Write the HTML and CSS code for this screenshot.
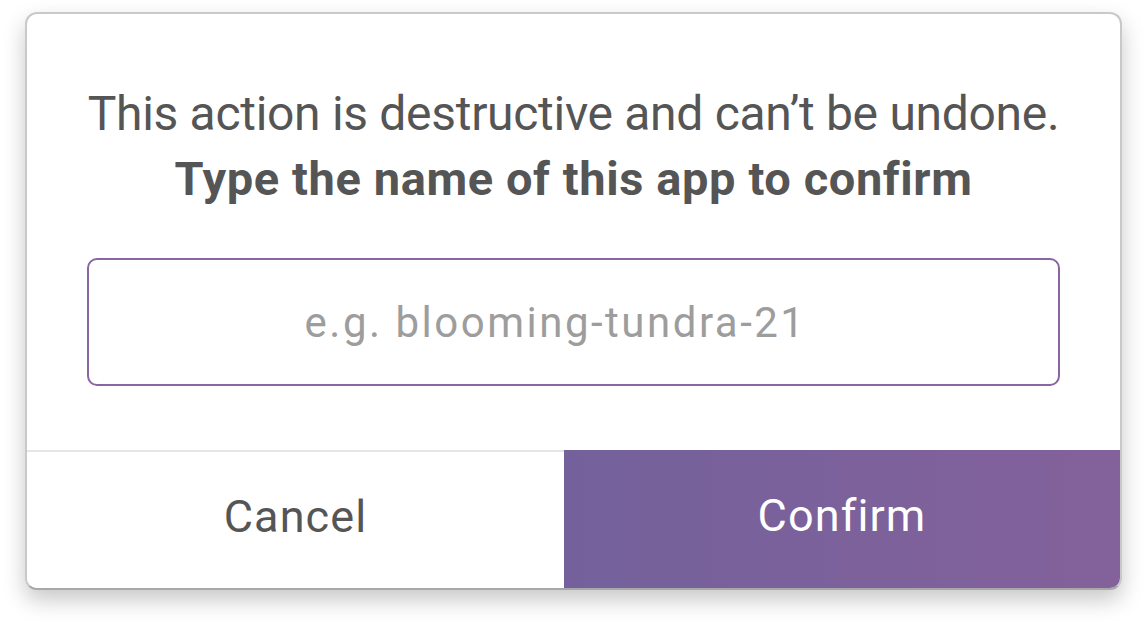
FILE: index.html
```html
<!DOCTYPE html>
<html>
<head>
<meta charset="utf-8">
<link rel="stylesheet" href="styles.css">
</head>
<body>
<div class="dialog">
  <div class="dialog-body">
    <p class="msg">This action is destructive and can’t be undone.</p>
    <p class="msg strong">Type the name of this app to confirm</p>
    <input class="app-input" type="text" placeholder="e.g. blooming-tundra-21">
  </div>
  <div class="actions">
    <button class="btn cancel">Cancel</button>
    <button class="btn confirm">Confirm</button>
  </div>
</div>
</body>
</html>
```

FILE: styles.css
```css
html, body {
  margin: 0;
  padding: 0;
  background: #ffffff;
}
body {
  font-family: Roboto, "Liberation Sans", sans-serif;
  color: #555555;
  min-height: 627px;
  box-sizing: border-box;
  padding: 12px 0 0 25px;
}
.dialog {
  box-sizing: border-box;
  width: 1097px;
  height: 578px;
  border: 2px solid #c9c9c9;
  border-bottom-color: #a8a8a8;
  border-radius: 12px;
  overflow: hidden;
  background: #fff;
  display: flex;
  flex-direction: column;
  box-shadow: 0 10px 22px rgba(0, 0, 0, 0.22);
}
.dialog-body {
  padding: 67px 60px 0;
  flex: 1;
  text-align: center;
}
.msg {
  margin: 0 -40px;
  font-size: 48px;
  line-height: 65px;
  font-weight: 400;
  letter-spacing: -0.3px;
  white-space: nowrap;
}
.msg.strong {
  font-weight: 700;
  font-size: 47px;
  letter-spacing: 0.6px;
}
.app-input {
  display: block;
  box-sizing: border-box;
  width: 100%;
  height: 128px;
  margin-top: 47px;
  border: 2.5px solid #8a65a1;
  border-radius: 10px;
  font-family: inherit;
  font-size: 42px;
  letter-spacing: 2.5px;
  color: #555;
  text-align: center;
  padding: 0 36px 0 0;
  outline: none;
}
.app-input::placeholder {
  color: #9d9d9d;
}
.actions {
  display: flex;
  height: 138px;
}
.btn {
  border: 0;
  margin: 0;
  padding: 0 0 8px;
  font-family: inherit;
  font-size: 45px;
  letter-spacing: 1.1px;
  cursor: pointer;
}
.cancel {
  width: 537px;
  background: #fff;
  color: #555;
  border-top: 2px solid #e6e6e6;
}
.confirm {
  flex: 1;
  color: #fff;
  background: linear-gradient(to right, #74619b, #84619b);
}
```
